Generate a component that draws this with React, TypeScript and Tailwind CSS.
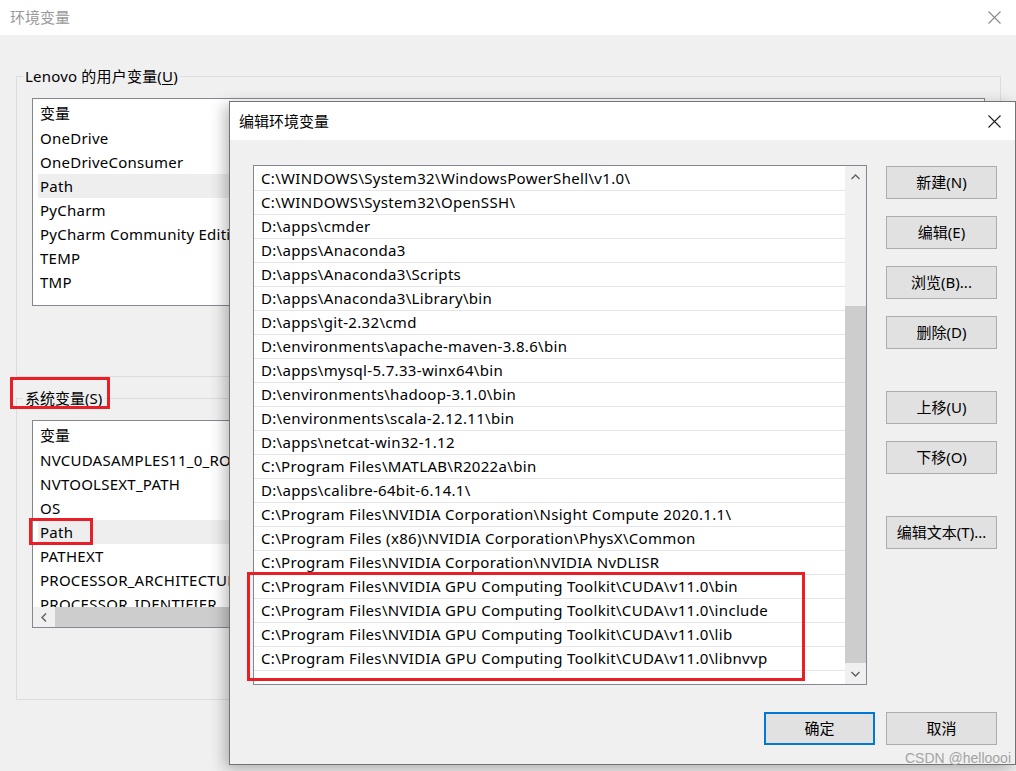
import React from "react";

const FONT = { fontFamily: '"Noto Sans", "Noto Sans CJK SC", sans-serif' };

function CloseX({ color }: { color: string }) {
  return (
    <svg width="13" height="13" viewBox="0 0 13 13">
      <path d="M0.5 0.5 L12.5 12.5 M12.5 0.5 L0.5 12.5" stroke={color} strokeWidth="1.1" fill="none" />
    </svg>
  );
}

function Chevron({ dir }: { dir: "up" | "down" | "left" }) {
  const d =
    dir === "up"
      ? "M0.5 5 L4.5 1 L8.5 5"
      : dir === "down"
      ? "M0.5 1 L4.5 5 L8.5 1"
      : "M5 0.5 L1 4.5 L5 8.5";
  const w = dir === "left" ? 6 : 9;
  const h = dir === "left" ? 9 : 6;
  return (
    <svg width={w} height={h} viewBox={`0 0 ${w} ${h}`}>
      <path d={d} stroke="#606060" strokeWidth="1.4" fill="none" />
    </svg>
  );
}

const userVars = ["OneDrive", "OneDriveConsumer", "Path", "PyCharm", "PyCharm Community Edition", "TEMP", "TMP"];
const sysVars = [
  "NVCUDASAMPLES11_0_ROOT",
  "NVTOOLSEXT_PATH",
  "OS",
  "Path",
  "PATHEXT",
  "PROCESSOR_ARCHITECTURE",
  "PROCESSOR_IDENTIFIER",
];

const paths = [
  "C:\\WINDOWS\\System32\\WindowsPowerShell\\v1.0\\",
  "C:\\WINDOWS\\System32\\OpenSSH\\",
  "D:\\apps\\cmder",
  "D:\\apps\\Anaconda3",
  "D:\\apps\\Anaconda3\\Scripts",
  "D:\\apps\\Anaconda3\\Library\\bin",
  "D:\\apps\\git-2.32\\cmd",
  "D:\\environments\\apache-maven-3.8.6\\bin",
  "D:\\apps\\mysql-5.7.33-winx64\\bin",
  "D:\\environments\\hadoop-3.1.0\\bin",
  "D:\\environments\\scala-2.12.11\\bin",
  "D:\\apps\\netcat-win32-1.12",
  "C:\\Program Files\\MATLAB\\R2022a\\bin",
  "D:\\apps\\calibre-64bit-6.14.1\\",
  "C:\\Program Files\\NVIDIA Corporation\\Nsight Compute 2020.1.1\\",
  "C:\\Program Files (x86)\\NVIDIA Corporation\\PhysX\\Common",
  "C:\\Program Files\\NVIDIA Corporation\\NVIDIA NvDLISR",
  "C:\\Program Files\\NVIDIA GPU Computing Toolkit\\CUDA\\v11.0\\bin",
  "C:\\Program Files\\NVIDIA GPU Computing Toolkit\\CUDA\\v11.0\\include",
  "C:\\Program Files\\NVIDIA GPU Computing Toolkit\\CUDA\\v11.0\\lib",
  "C:\\Program Files\\NVIDIA GPU Computing Toolkit\\CUDA\\v11.0\\libnvvp",
];

function VarList({ items, selected, hscroll }: { items: string[]; selected: string; hscroll?: boolean }) {
  return (
    <div className="h-[208px] border border-[#828790] bg-white flex flex-col overflow-hidden">
      <div className="flex-1 overflow-hidden pt-[2px]">
        <div className="h-[25px] leading-[25px] ml-[5px] pl-[2px] whitespace-nowrap">变量</div>
        {items.map((it) => (
          <div
            key={it}
            className={`h-[24px] leading-[24px] ml-[5px] pl-[2px] whitespace-nowrap tracking-[0.25px] ${
              it === selected ? "bg-[#eeeeee]" : ""
            }`}
          >
            {it}
          </div>
        ))}
      </div>
      {hscroll && (
        <div className="h-[20px] flex bg-[#f0f0f0] shrink-0">
          <div className="w-[22px] flex items-center justify-center">
            <Chevron dir="left" />
          </div>
          <div className="flex-1 bg-[#cdcdcd]" />
        </div>
      )}
    </div>
  );
}

function Btn({ children, primary }: { children: React.ReactNode; primary?: boolean }) {
  return (
    <div
      className={`w-[111px] h-[33px] flex items-center justify-center bg-[#e1e1e1] text-[15px] text-black ${
        primary ? "border-2 border-[#0078d7]" : "border border-[#adadad]"
      }`}
    >
      {children}
    </div>
  );
}

export default function App() {
  return (
    <div className="relative w-[1016px] h-[771px] bg-[#f0f0f0] overflow-hidden text-[15px] text-black" style={FONT}>
      {/* Main window title */}
      <div className="h-[35px] bg-white flex items-center justify-between pl-[10px] pr-[15px]">
        <span className="text-[#9a9a9a]">环境变量</span>
        <CloseX color="#8a8a8a" />
      </div>

      {/* Main window body */}
      <div className="pl-[16px] pr-[15px]">
        <fieldset className="mt-[31px] min-w-0 border border-[#dcdcdc] px-[15px] pt-[12px] pb-[70px]">
          <legend className="ml-[-9px] px-[2px] leading-[20px] tracking-[0.2px]">
            Lenovo 的用户变量(<span className="underline underline-offset-2">U</span>)
          </legend>
          <VarList items={userVars} selected="Path" />
        </fieldset>
        <fieldset className="mt-[11px] min-w-0 border border-[#dcdcdc] px-[15px] pt-[12px] pb-[71px]">
          <legend className="ml-[-9px] px-[2px] leading-[20px]">
            系统变量(<span className="underline underline-offset-2">S</span>)
          </legend>
          <VarList items={sysVars} selected="Path" hscroll />
        </fieldset>
      </div>

      {/* annotation boxes on main window */}
      <div className="absolute left-[10px] top-[377px] w-[100px] h-[32px] border-[3px] border-[#e81f27]" />
      <div className="absolute left-[29px] top-[518px] w-[64px] h-[27px] border-[3px] border-[#e81f27]" />

      {/* Edit dialog */}
      <div className="absolute left-[229px] top-[101px] w-[787px] h-[664px] border border-[#737373] bg-[#f0f0f0] flex flex-col shadow-[-4px_4px_14px_rgba(0,0,0,0.28)]">
        <div className="h-[38px] bg-white flex items-center justify-between pl-[9px] shrink-0">
          <span>编辑环境变量</span>
          <div className="w-[42px] flex items-center justify-center">
            <CloseX color="#1e1e1e" />
          </div>
        </div>
        <div className="flex-1 flex flex-col pl-[23px] pr-[18px] pt-[25px]">
          <div className="flex gap-[19px]">
            <div className="w-[614px] h-[520px] border border-[#828790] bg-white flex">
              <div className="flex-1 pt-[1px] overflow-hidden">
                {paths.map((p) => (
                  <div
                    key={p}
                    className="h-[24px] leading-[23px] border-b border-[#e6e6e6] pl-[7px] whitespace-nowrap tracking-[0.32px]"
                  >
                    {p}
                  </div>
                ))}
              </div>
              <div className="w-[21px] bg-[#f0f0f0] flex flex-col">
                <div className="h-[21px] flex items-center justify-center">
                  <Chevron dir="up" />
                </div>
                <div className="h-[119px]" />
                <div className="flex-1 bg-[#cdcdcd]" />
                <div className="h-[21px] flex items-center justify-center">
                  <Chevron dir="down" />
                </div>
              </div>
            </div>
            <div className="flex flex-col pt-[1px]">
              <Btn>新建(N)</Btn>
              <div className="mt-[17px]">
                <Btn>编辑(E)</Btn>
              </div>
              <div className="mt-[17px]">
                <Btn>浏览(B)...</Btn>
              </div>
              <div className="mt-[17px]">
                <Btn>删除(D)</Btn>
              </div>
              <div className="mt-[42px]">
                <Btn>上移(U)</Btn>
              </div>
              <div className="mt-[17px]">
                <Btn>下移(O)</Btn>
              </div>
              <div className="mt-[42px]">
                <Btn>编辑文本(T)...</Btn>
              </div>
            </div>
          </div>
          <div className="flex justify-end gap-[11px] mt-[27px]">
            <Btn primary>确定</Btn>
            <Btn>取消</Btn>
          </div>
        </div>
        {/* annotation box */}
        <div className="absolute left-[17px] top-[470px] w-[558px] h-[109px] border-[3px] border-[#e81f27]" />
      </div>

      {/* watermark */}
      <div
        className="absolute right-[5px] bottom-[5px] text-[14px] leading-[16px] text-[#a3a3a3]"
        style={{ fontFamily: '"Liberation Sans", Arial, sans-serif' }}
      >
        CSDN @helloooi
      </div>
    </div>
  );
}
